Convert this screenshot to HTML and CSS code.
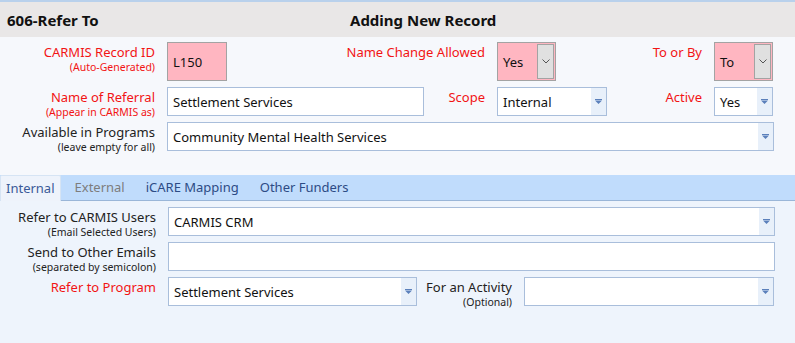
FILE: index.html
```html
<!DOCTYPE html>
<html lang="en">
<head>
  <meta charset="UTF-8" />
  <meta name="viewport" content="width=device-width, initial-scale=1.0" />
  <title>606-Refer To</title>
  <link rel="stylesheet" href="styles.css">
</head>
<body>

  <!-- Title bar -->
  <div class="titlebar">
    <span class="form-code">606-Refer To</span>
    <span class="form-mode">Adding New Record</span>
  </div>

  <!-- Main record fields -->
  <div class="record">
    <div class="row tall">
      <div class="label req w155">CARMIS Record ID<small>(Auto-Generated)</small></div>
      <div class="box pink w60">L150</div>
      <div class="label req w258">Name Change Allowed</div>
      <div class="box pink combo w59">Yes<span class="btn-gray"><svg width="8" height="5" viewBox="0 0 8 5"><path d="M0.5 0.5L4 4L7.5 0.5" fill="none" stroke="#555" stroke-width="1"/></svg></span></div>
      <div class="label req w146">To or By</div>
      <div class="box pink combo w59">To<span class="btn-gray"><svg width="8" height="5" viewBox="0 0 8 5"><path d="M0.5 0.5L4 4L7.5 0.5" fill="none" stroke="#555" stroke-width="1"/></svg></span></div>
    </div>
    <div class="row">
      <div class="label req w155">Name of Referral<small>(Appear in CARMIS as)</small></div>
      <div class="box w257">Settlement Services</div>
      <div class="label req w61">Scope</div>
      <div class="box combo w110">Internal<span class="btn-blue"><svg width="7" height="5" viewBox="0 0 7 5"><path d="M0 0H7V1H0Z M0 1.5H7L3.5 5Z" fill="#5b80bb"/></svg></span></div>
      <div class="label req w95">Active</div>
      <div class="box combo w59">Yes<span class="btn-blue"><svg width="7" height="5" viewBox="0 0 7 5"><path d="M0 0H7V1H0Z M0 1.5H7L3.5 5Z" fill="#5b80bb"/></svg></span></div>
    </div>
    <div class="row">
      <div class="label w155">Available in Programs<small>(leave empty for all)</small></div>
      <div class="box combo w607">Community Mental Health Services<span class="btn-blue"><svg width="7" height="5" viewBox="0 0 7 5"><path d="M0 0H7V1H0Z M0 1.5H7L3.5 5Z" fill="#5b80bb"/></svg></span></div>
    </div>
  </div>

  <!-- Tabs -->
  <div class="tabs">
    <span class="tab active">Internal</span>
    <span class="tab disabled">External</span>
    <span class="tab">iCARE Mapping</span>
    <span class="tab">Other Funders</span>
  </div>

  <div class="panel">
    <div class="row">
      <div class="label w156">Refer to CARMIS Users<small>(Email Selected Users)</small></div>
      <div class="box combo w607">CARMIS CRM<span class="btn-blue"><svg width="7" height="5" viewBox="0 0 7 5"><path d="M0 0H7V1H0Z M0 1.5H7L3.5 5Z" fill="#5b80bb"/></svg></span></div>
    </div>
    <div class="row">
      <div class="label w156">Send to Other Emails<small>(separated by semicolon)</small></div>
      <div class="box w607"></div>
    </div>
    <div class="row">
      <div class="label req w156">Refer to Program</div>
      <div class="box combo w249">Settlement Services<span class="btn-blue"><svg width="7" height="5" viewBox="0 0 7 5"><path d="M0 0H7V1H0Z M0 1.5H7L3.5 5Z" fill="#5b80bb"/></svg></span></div>
      <div class="label w95">For an Activity<small>(Optional)</small></div>
      <div class="box combo w250">&nbsp;<span class="btn-blue"><svg width="7" height="5" viewBox="0 0 7 5"><path d="M0 0H7V1H0Z M0 1.5H7L3.5 5Z" fill="#5b80bb"/></svg></span></div>
    </div>
  </div>

</body>
</html>
```

FILE: styles.css
```css
html, body {
  height: 100%;
}
body {
  margin: 0;
  font-family: "Noto Sans", "Open Sans", sans-serif;
  font-size: 13px;
  color: #1a1a1a;
  background: #eef4fc;
  border-top: 2px solid #b9d1ec;
  box-sizing: border-box;
}
.titlebar {
  display: flex;
  align-items: center;
  height: 35px;
  padding-left: 7px;
  background: #e9e7e7;
  font-size: 15px;
  font-weight: bold;
  color: #111;
}
.form-code {
  width: 343px;
}
.record {
  background: #f6f8fc;
  padding: 5px 0 24px;
  display: flex;
  flex-direction: column;
  gap: 6px;
}
.row {
  display: flex;
  height: 29px;
}
.row.tall {
  height: 39px;
}
.label {
  box-sizing: border-box;
  padding-right: 12px;
  padding-top: 2px;
  text-align: right;
  line-height: 17px;
  white-space: nowrap;
  color: #222;
}
.label small {
  display: block;
  font-size: 10.5px;
  line-height: 13px;
}
.label.req {
  color: #f21414;
}
.w155 { width: 167px; }
.w156 { width: 168px; }
.w258 { width: 270px; }
.w146 { width: 158px; }
.w61 { width: 73px; }
.w95 { width: 107px; }
.box {
  box-sizing: border-box;
  position: relative;
  display: flex;
  align-items: center;
  height: 100%;
  padding-left: 5px;
  background: #fff;
  border: 1px solid #a9bedb;
  color: #111;
  white-space: nowrap;
}
.w60 { width: 60px; }
.w59 { width: 59px; }
.w257 { width: 257px; }
.w110 { width: 110px; }
.w607 { width: 607px; }
.w249 { width: 249px; }
.w250 { width: 250px; }
.pink {
  background: #ffb6c1;
  border-color: #a3a3a3;
}
.btn-gray {
  position: absolute;
  top: 1px;
  right: 1px;
  bottom: 1px;
  width: 15px;
  display: flex;
  align-items: center;
  justify-content: center;
  background: #e0e0e0;
  border: 1px solid #a3a3a3;
}
.btn-blue {
  position: absolute;
  top: 0;
  right: 0;
  bottom: 0;
  width: 15px;
  display: flex;
  align-items: center;
  justify-content: center;
  background: #e8f0fa;
}
.tabs {
  display: flex;
  height: 25px;
  background: #c0dcfc;
  border-bottom: 1px solid #9ab6d8;
  align-items: flex-end;
}
.tab {
  box-sizing: border-box;
  height: 25px;
  line-height: 24px;
  padding: 0 10px 0 11px;
  color: #2d4b85;
}
.tab.active {
  height: 26px;
  margin-bottom: -1px;
  margin-right: 3px;
  padding: 0 5px;
  background: #eef3fb;
  border: 1px solid #d6e4f4;
  border-bottom: none;
  border-radius: 2px 2px 0 0;
  color: #3a5a98;
}
.tab.disabled {
  color: #7d7d7d;
}
.panel {
  padding-top: 6px;
  display: flex;
  flex-direction: column;
  gap: 6px;
}
```
